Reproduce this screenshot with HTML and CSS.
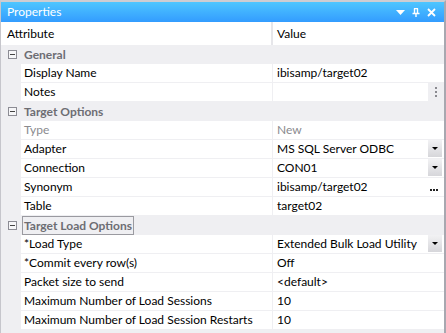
FILE: index.html
```html
<!DOCTYPE html>
<html>
<head>
<meta charset="utf-8">
<link rel="stylesheet" href="styles.css">
</head>
<body>
<div class="panel">
  <div class="titlebar">
    <span class="title">Properties</span>
    <div class="tools">
      <svg width="9" height="5" viewBox="0 0 9 5"><polygon points="0,0 9,0 4.5,5" fill="#fff"/></svg>
      <svg width="8" height="9" viewBox="0 0 8 9"><path d="M2 0.5H6M2.5 0.5V5M5.5 0.5V5M0.5 5.5H7.5M4 5.5V9" stroke="#fff" stroke-width="1.4" fill="none"/></svg>
      <svg width="9" height="9" viewBox="0 0 9 9"><path d="M1 1L8 8M8 1L1 8" stroke="#fff" stroke-width="1.8"/></svg>
    </div>
  </div>
  <div class="head">
    <div class="hname">Attribute</div>
    <div class="hval">Value</div>
  </div>
  <div class="grid">
    <div class="cat"><span class="box"></span><span class="ctext">General</span></div>
    <div class="row"><div class="name">Display Name</div><div class="val">ibisamp/target02</div></div>
    <div class="row"><div class="name">Notes</div><div class="val"><span class="vtxt"></span><span class="dots"><i></i><i></i><i></i></span></div></div>
    <div class="cat"><span class="box"></span><span class="ctext">Target Options</span></div>
    <div class="row ro"><div class="name">Type</div><div class="val">New</div></div>
    <div class="row"><div class="name">Adapter</div><div class="val"><span class="vtxt">MS SQL Server ODBC</span><span class="dd"></span></div></div>
    <div class="row"><div class="name">Connection</div><div class="val"><span class="vtxt">CON01</span><span class="dd"></span></div></div>
    <div class="row"><div class="name">Synonym</div><div class="val"><span class="vtxt">ibisamp/target02</span><span class="ell"><i></i><i></i><i></i></span></div></div>
    <div class="row"><div class="name">Table</div><div class="val">target02</div></div>
    <div class="cat"><span class="box"></span><span class="ctext focus">Target Load Options</span></div>
    <div class="row"><div class="name">*Load Type</div><div class="val"><span class="vtxt">Extended Bulk Load Utility</span><span class="dd"></span></div></div>
    <div class="row"><div class="name">*Commit every row(s)</div><div class="val">Off</div></div>
    <div class="row"><div class="name">Packet size to send</div><div class="val">&lt;default&gt;</div></div>
    <div class="row"><div class="name">Maximum Number of Load Sessions</div><div class="val">10</div></div>
    <div class="row"><div class="name">Maximum Number of Load Session Restarts</div><div class="val">10</div></div>
  </div>
</div>
</body>
</html>
```
FILE: styles.css
```css
html, body {
  margin: 0;
  padding: 0;
  background: #efeff2;
}
.panel {
  width: 446px;
  height: 333px;
  box-sizing: border-box;
  border-top: 2px solid #cdcdd2;
  border-left: 1px solid #c6c6cc;
  border-right: 2px solid #a8a8b0;
  background: #efeff2;
  font-family: "Lato", "Noto Sans", sans-serif;
  font-size: 12px;
  color: #000;
  overflow: hidden;
}
.titlebar {
  height: 20px;
  background: linear-gradient(#4ec6ff, #339cff);
  display: flex;
  align-items: center;
  justify-content: space-between;
  padding: 0 8px 0 6px;
}
.title {
  color: #fff;
  font-size: 12px;
  line-height: 20px;
}
.tools {
  display: flex;
  align-items: center;
  gap: 7px;
}
.head {
  height: 23px;
  display: flex;
  background: #fff;
}
.hname {
  width: 272px;
  box-sizing: border-box;
  padding-left: 6px;
  line-height: 23px;
  border-right: 2px solid #e6e6ea;
}
.hval {
  flex: 1;
  padding-left: 4px;
  line-height: 23px;
}
.grid {
  display: flex;
  flex-direction: column;
}
.cat {
  height: 19px;
  display: flex;
  align-items: center;
  background: #efeff2;
}
.box {
  width: 9px;
  height: 9px;
  box-sizing: border-box;
  border: 1px solid #8c8c94;
  margin-left: 7px;
  margin-right: 5px;
  position: relative;
  background: #f6f6f8;
}
.box::after {
  content: "";
  position: absolute;
  left: 1px;
  top: 3px;
  width: 5px;
  height: 1px;
  background: #444;
}
.ctext {
  font-weight: bold;
  color: #6d6d73;
  line-height: 17px;
  padding: 0 1px;
  border: 1px solid transparent;
}
.ctext.focus {
  border-color: #9a9aa0;
}
.row {
  height: 19px;
  display: flex;
  padding-left: 20px;
  box-sizing: border-box;
}
.name {
  width: 251px;
  height: 18px;
  background: #fff;
  padding-left: 3px;
  line-height: 18px;
  box-sizing: border-box;
  margin-right: 1px;
  white-space: nowrap;
}
.val {
  flex: 1;
  height: 18px;
  background: #fff;
  padding-left: 4px;
  line-height: 18px;
  display: flex;
  white-space: nowrap;
}
.ro .name, .ro .val {
  color: #8a8a8e;
}
.vtxt {
  flex: 1;
}
.dd {
  width: 14px;
  height: 17px;
  margin-right: 2px;
  background: linear-gradient(#f2f2f4, #d6d6da);
  position: relative;
}
.dd::after {
  content: "";
  position: absolute;
  left: 4px;
  top: 7px;
  border-left: 3px solid transparent;
  border-right: 3px solid transparent;
  border-top: 3px solid #000;
}
.ell {
  width: 16px;
  display: flex;
  align-items: flex-end;
  gap: 1px;
  padding-bottom: 5px;
  box-sizing: border-box;
  padding-left: 2px;
}
.ell i {
  display: block;
  width: 2px;
  height: 2px;
  background: #222;
}
.dots {
  width: 16px;
  background: #efeff2;
  display: flex;
  flex-direction: column;
  align-items: center;
  justify-content: center;
  gap: 2px;
}
.dots i {
  display: block;
  width: 2px;
  height: 2px;
  background: #8a8a90;
}
```
